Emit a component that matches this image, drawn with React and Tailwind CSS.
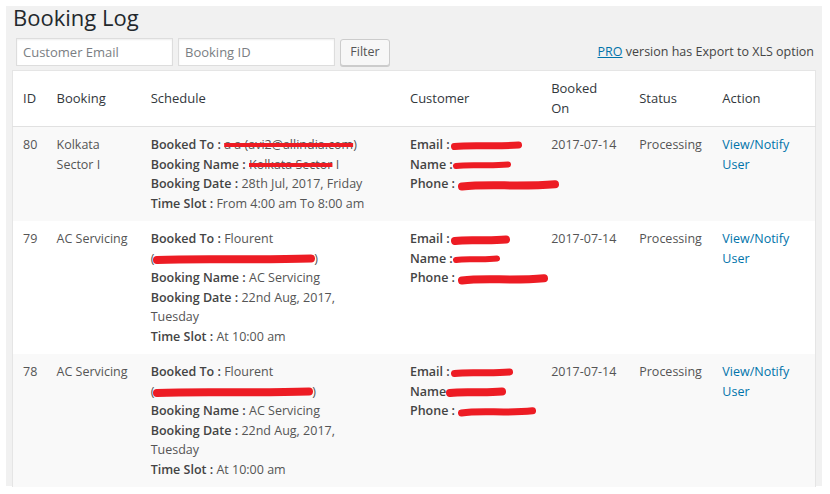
import React from "react";

function Red({ w, t = 7, wobble = 1, className = "" }) {
  const h = t + 6;
  const y = h / 2;
  const d = `M${t / 2} ${y + wobble} C ${w * 0.3} ${y - wobble}, ${w * 0.6} ${y + wobble * 1.5}, ${w - t / 2} ${y - wobble * 0.5}`;
  return (
    <svg
      width={w}
      height={h}
      viewBox={`0 0 ${w} ${h}`}
      className={`inline-block align-middle ${className}`}
    >
      <path d={d} stroke="#ed1c24" strokeWidth={t} strokeLinecap="round" fill="none" />
    </svg>
  );
}

function L({ children }) {
  return <span className="font-semibold text-[#444]">{children}</span>;
}

function Strike({ children }) {
  return (
    <span className="line-through decoration-[#ed1c24] decoration-[4px]">{children}</span>
  );
}

const rows = [
  {
    id: "80",
    booking: (
      <>
        Kolkata
        <br />
        Sector I
      </>
    ),
    schedule: (
      <>
        <div>
          <L>Booked To :</L> <Strike>a a (avi2@allindia.com</Strike>)
        </div>
        <div>
          <L>Booking Name :</L> <Strike>Kolkata Sector</Strike> I
        </div>
        <div>
          <L>Booking Date :</L> 28th Jul, 2017, Friday
        </div>
        <div>
          <L>Time Slot :</L> From 4:00 am To 8:00 am
        </div>
      </>
    ),
    customer: (
      <>
        <div>
          <L>Email :</L> <Red w={71} t={7} className="-ml-[2px]" />
        </div>
        <div>
          <L>Name :</L> <Red w={58} t={6} className="-ml-[3px]" />
        </div>
        <div>
          <L>Phone :</L> <Red w={101} t={8} wobble={1.5} />
        </div>
      </>
    ),
    bg: "bg-[#f9f9f9]",
  },
  {
    id: "79",
    booking: "AC Servicing",
    schedule: (
      <>
        <div>
          <L>Booked To :</L> Flourent
        </div>
        <div>
          (<Red w={162} t={8} className="-mx-[1px]" />)
        </div>
        <div>
          <L>Booking Name :</L> AC Servicing
        </div>
        <div>
          <L>Booking Date :</L> 22nd Aug, 2017,
        </div>
        <div>Tuesday</div>
        <div>
          <L>Time Slot :</L> At 10:00 am
        </div>
      </>
    ),
    customer: (
      <>
        <div>
          <L>Email :</L> <Red w={59} t={8} className="-ml-[2px]" />
        </div>
        <div>
          <L>Name :</L> <Red w={47} t={6} className="-ml-[3px]" />
        </div>
        <div>
          <L>Phone :</L> <Red w={90} t={8} wobble={1.5} />
        </div>
      </>
    ),
    bg: "bg-white",
  },
  {
    id: "78",
    booking: "AC Servicing",
    schedule: (
      <>
        <div>
          <L>Booked To :</L> Flourent
        </div>
        <div>
          (<Red w={160} t={8} className="-mx-[1px]" />)
        </div>
        <div>
          <L>Booking Name :</L> AC Servicing
        </div>
        <div>
          <L>Booking Date :</L> 22nd Aug, 2017,
        </div>
        <div>Tuesday</div>
        <div>
          <L>Time Slot :</L> At 10:00 am
        </div>
      </>
    ),
    customer: (
      <>
        <div>
          <L>Email :</L> <Red w={62} t={7} className="-ml-[2px]" />
        </div>
        <div>
          <L>Name</L> <Red w={60} t={8} className="-ml-[3px]" />
        </div>
        <div>
          <L>Phone :</L> <Red w={78} t={7} wobble={1.5} />
        </div>
      </>
    ),
    bg: "bg-[#f9f9f9]",
  },
];

export default function App() {
  return (
    <div className="w-[830px] h-[494px] bg-white pt-[6px] pl-[6px] pr-[8px] font-['Open_Sans',sans-serif] overflow-hidden">
      <div className="h-[480px] bg-[#f1f1f1] px-[6px]">
        <h1 className="text-[22px] leading-none text-[#23282d] pl-[1px] m-0">Booking Log</h1>
        <div className="mt-[9px] flex items-center pl-[4px] pr-[2px]">
          <input
            placeholder="Customer Email"
            className="w-[157px] h-[28px] border border-[#ddd] bg-white px-[6px] text-[13px] text-[#32373c] placeholder:text-[#7a7e83] shadow-[inset_0_1px_2px_rgba(0,0,0,0.07)] outline-none"
          />
          <input
            placeholder="Booking ID"
            className="ml-[5px] w-[157px] h-[28px] border border-[#ddd] bg-white px-[6px] text-[13px] text-[#32373c] placeholder:text-[#7a7e83] shadow-[inset_0_1px_2px_rgba(0,0,0,0.07)] outline-none"
          />
          <button className="ml-[5px] mt-[2px] w-[50px] h-[27px] rounded-[3px] border border-[#ccc] bg-[#f7f7f7] text-[12.5px] text-[#555] shadow-[0_1px_0_#ccc]">
            Filter
          </button>
          <div className="ml-auto pt-[2px] text-[12.5px] text-[#444]">
            <a className="text-[#0073aa] underline">PRO</a> version has Export to XLS option
          </div>
        </div>
        <div className="mt-[4px] h-[417px] overflow-hidden">
          <table className="w-[804px] table-fixed border-collapse border border-[#e5e5e5] bg-white text-[12.5px] leading-[19.5px] text-[#555]">
            <colgroup>
              <col className="w-[34px]" />
              <col className="w-[94px]" />
              <col className="w-[259px]" />
              <col className="w-[141px]" />
              <col className="w-[88px]" />
              <col className="w-[83px]" />
              <col className="w-[103px]" />
            </colgroup>
            <thead>
              <tr className="border-b border-[#e1e1e1]">
                {["ID", "Booking", "Schedule", "Customer", null, "Status", "Action"].map((h, i) => (
                  <th
                    key={i}
                    className="px-[10px] py-[8px] text-left font-normal text-[13px] leading-[19.5px] text-[#32373c] align-middle"
                  >
                    {h === null ? (
                      <>
                        Booked
                        <br />
                        On
                      </>
                    ) : (
                      h
                    )}
                  </th>
                ))}
              </tr>
            </thead>
            <tbody>
              {rows.map((r) => (
                <tr key={r.id} className={r.bg}>
                  <td className="px-[10px] py-[8px] align-top whitespace-nowrap">{r.id}</td>
                  <td className="px-[10px] py-[8px] align-top whitespace-nowrap">{r.booking}</td>
                  <td className="px-[10px] py-[8px] align-top whitespace-nowrap">{r.schedule}</td>
                  <td className="px-[10px] py-[8px] align-top whitespace-nowrap">{r.customer}</td>
                  <td className="px-[10px] py-[8px] align-top whitespace-nowrap">2017-07-14</td>
                  <td className="px-[10px] py-[8px] align-top whitespace-nowrap">Processing</td>
                  <td className="px-[10px] py-[8px] align-top whitespace-nowrap">
                    <a className="text-[#0073aa]">
                      View/Notify
                      <br />
                      User
                    </a>
                  </td>
                </tr>
              ))}
            </tbody>
          </table>
        </div>
      </div>
    </div>
  );
}
